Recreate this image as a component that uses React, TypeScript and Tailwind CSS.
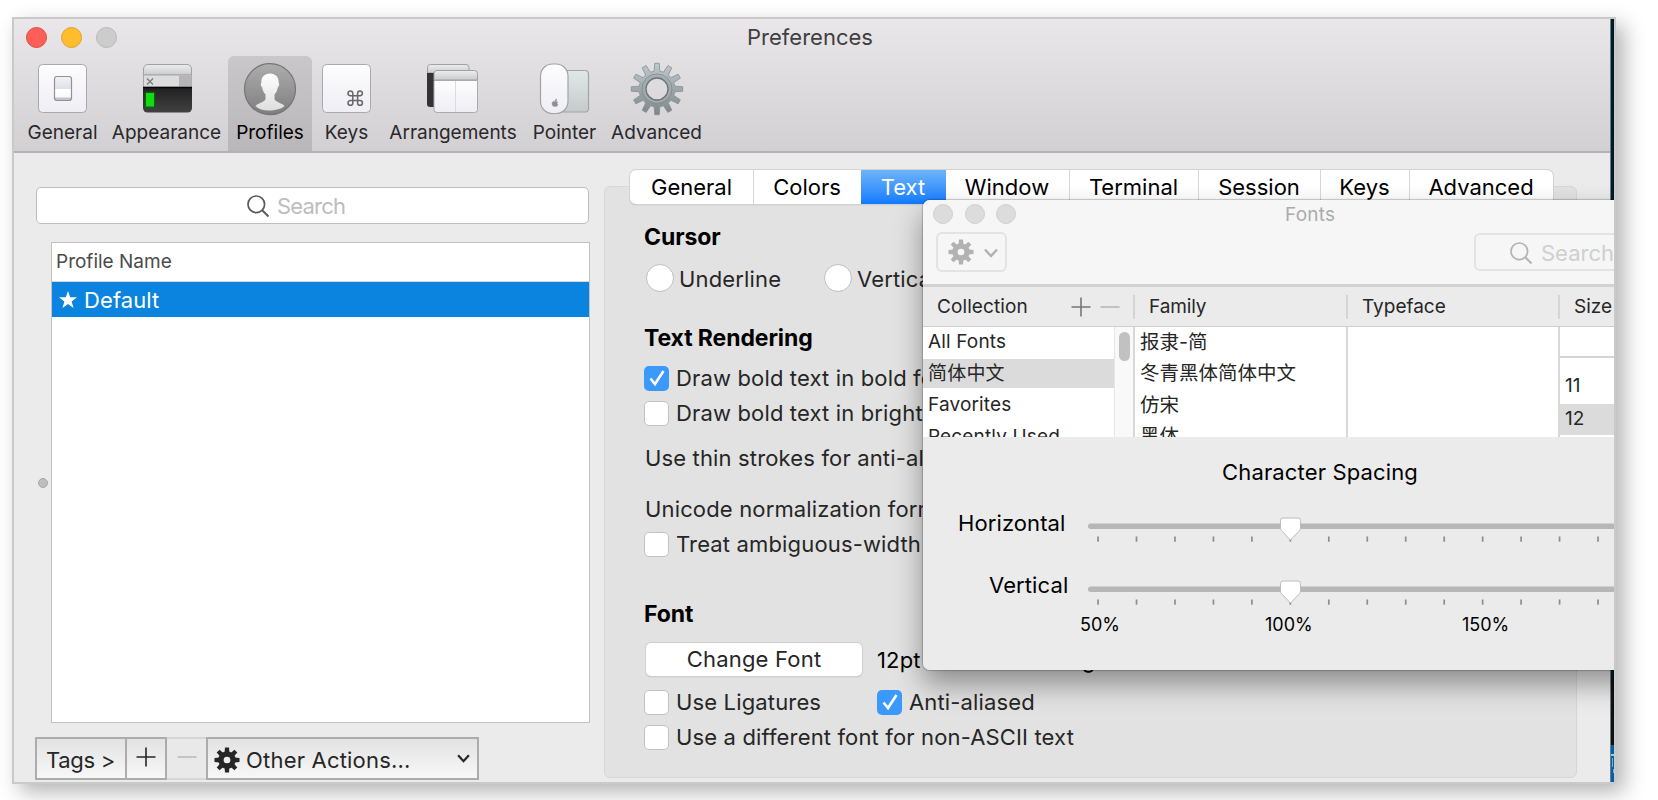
import React from "react";

function Gear({ teeth, r, inner, hole, tooth, className, fill }: { teeth: number; r: number; inner: number; hole: number; tooth: number; className: string; fill: string }) {
  const items = Array.from({ length: teeth }, (_, i) => (360 / teeth) * i);
  return (
    <svg viewBox="-27 -27 54 54" className={className}>
      {items.map((a) => (
        <path key={a} transform={`rotate(${a})`} fill={fill} d={`M${-tooth} ${-inner + 3}L${-tooth * 0.85} ${-r}H${tooth * 0.85}L${tooth} ${-inner + 3}Z`} />
      ))}
      <circle r={(inner + hole) / 2} fill="none" stroke={fill} strokeWidth={inner - hole} />
    </svg>
  );
}

function SmallGear({ className }: { className: string }) {
  return <Gear teeth={8} r={26} inner={18} hole={7} tooth={5} fill="currentColor" className={className} />;
}

function Magnifier({ className }: { className: string }) {
  return (
    <svg viewBox="0 0 23 23" className={className} fill="none" stroke="currentColor">
      <circle cx="9.3" cy="9.3" r="8.3" strokeWidth="1.7" />
      <path d="M15.2 15.2L21.5 21.5" strokeWidth="2" />
    </svg>
  );
}

function Plus({ className }: { className: string }) {
  return (
    <svg viewBox="0 0 20 20" className={className} stroke="currentColor" strokeWidth="1.6">
      <path d="M0.5 10H19.5M10 0.5V19.5" />
    </svg>
  );
}

function Minus({ className }: { className: string }) {
  return (
    <svg viewBox="0 0 20 20" className={className} stroke="currentColor" strokeWidth="1.4">
      <path d="M0.5 10H19.5" />
    </svg>
  );
}

function Chevron({ className }: { className: string }) {
  return (
    <svg viewBox="0 0 14 10" className={className} fill="none" stroke="currentColor" strokeWidth="2.5">
      <path d="M1 1.5L7 8L13 1.5" />
    </svg>
  );
}

function GeneralIcon() {
  return (
    <svg viewBox="0 1 54 54" className="mr-px h-[54px] w-[54px]">
      <defs>
        <linearGradient id="plate" x1="0" y1="0" x2="0" y2="1"><stop offset="0" stopColor="#fdfdfe" /><stop offset="1" stopColor="#eeeef4" /></linearGradient>
        <linearGradient id="sw" x1="0" y1="0" x2="0" y2="1"><stop offset="0" stopColor="#f2f4f7" /><stop offset="0.5" stopColor="#dde1ea" /><stop offset="0.52" stopColor="#fff" /><stop offset="0.85" stopColor="#fafafc" /><stop offset="0.9" stopColor="#c4c4c8" /></linearGradient>
      </defs>
      <rect x="3.5" y="3.5" width="48" height="48" rx="4" fill="url(#plate)" stroke="#a9a8ac" />
      <rect x="19.5" y="15.5" width="17" height="24" rx="2.5" fill="url(#sw)" stroke="#929296" strokeWidth="1.2" />
    </svg>
  );
}

function AppearanceIcon() {
  return (
    <svg viewBox="0 1 54 54" className="h-[54px] w-[54px]">
      <defs>
        <linearGradient id="bar" x1="0" y1="0" x2="0" y2="1"><stop offset="0" stopColor="#ecedee" /><stop offset="1" stopColor="#c9cccd" /></linearGradient>
        <linearGradient id="term" x1="0" y1="0" x2="0" y2="1"><stop offset="0" stopColor="#202020" /><stop offset="1" stopColor="#414141" /></linearGradient>
      </defs>
      <path d="M3.5 14V8a4.5 4.5 0 0 1 4.500-4.500H47a4.500 4.500 0 0 1 4.500 4.500V14Z" fill="url(#bar)" stroke="#a0a1a3" />
      <rect x="3.500" y="14" width="48" height="12" fill="#dcdcde" stroke="#a8a8aa" />
      <rect x="39" y="14.500" width="12.500" height="12" fill="#b5b5b7" />
      <path d="M7 17.500l6 6M13 17.500l-6 6" stroke="#777" strokeWidth="1.100" />
      <path d="M3 26H52V47a4.500 4.500 0 0 1-4.500 4.500H7.500A4.500 4.500 0 0 1 3 47Z" fill="url(#term)" />
      <path d="M3 26.500H52" stroke="#050505" strokeWidth="1.400" />
      <rect x="4.500" y="30.500" width="11" height="16.500" rx="1.500" fill="#0c6b0c" opacity="0.7" />
      <rect x="6" y="32" width="8" height="13.500" fill="#10dc10" />
    </svg>
  );
}

function ProfilesIcon() {
  return (
    <svg viewBox="0 0 54 54" className="h-[54px] w-[54px]">
      <defs>
        <linearGradient id="disc" x1="0" y1="0" x2="0" y2="1"><stop offset="0" stopColor="#adadad" /><stop offset="1" stopColor="#7e7e7e" /></linearGradient>
        <linearGradient id="man" x1="0" y1="0" x2="0" y2="1"><stop offset="0" stopColor="#fff" /><stop offset="1" stopColor="#dededf" /></linearGradient>
      </defs>
      <circle cx="27" cy="27.200" r="25.500" fill="url(#disc)" stroke="#757575" strokeWidth="1.200" />
      <path d="M27 11.500C32.500 11.500 36 15 35.600 20.500C36.800 21.500 36 24.500 34.700 25.800C34.300 29 32.500 31.500 31.500 32.500V37C32.500 40.500 38.500 40.500 41.500 44C36 49.500 18 50.500 12.500 44C15.500 40.500 21.500 40.500 22.500 37V32.500C21.500 31.500 19.700 29 19.300 25.800C18 24.500 17.200 21.500 18.400 20.500C18 15 21.500 11.500 27 11.500Z" fill="url(#man)" />
    </svg>
  );
}

function KeysIcon() {
  return (
    <svg viewBox="0 1 54 54" className="mr-px h-[54px] w-[54px]">
      <rect x="3.500" y="3.500" width="48" height="48" rx="4" fill="url(#plate)" stroke="#a9a8ac" />
      <path transform="translate(26.600 27.500) scale(.8)" d="M15 6v12a3 3 0 1 0 3-3H6a3 3 0 1 0 3 3V6a3 3 0 1 0-3 3h12a3 3 0 1 0-3-3" fill="none" stroke="#66676a" strokeWidth="1.900" />
    </svg>
  );
}

function ArrangementsIcon() {
  return (
    <svg viewBox="0 1 54 54" className="h-[54px] w-[54px]">
      <path d="M1.500 12V6.500a3 3 0 0 1 3-3H40a3 3 0 0 1 3 3V12Z" fill="url(#bar)" stroke="#a0a1a3" />
      <path d="M1 12H12V46H4a3 3 0 0 1-3-3Z" fill="#333" />
      <path d="M8 19V12.500a3 3 0 0 1 3-3H48.500a3 3 0 0 1 3 3V19Z" fill="url(#bar)" stroke="#a0a1a3" />
      <path d="M8 19.500H51.500V48.500a3 3 0 0 1-3 3H11a3 3 0 0 1-3-3Z" fill="url(#plate)" stroke="#a9aaae" />
      <path d="M29.500 20V51" stroke="#dcdce0" />
    </svg>
  );
}

function PointerIcon() {
  return (
    <svg viewBox="0 0.5 54 54" className="h-[54px] w-[54px]">
      <defs><linearGradient id="pad" x1="0" y1="0" x2="0" y2="1"><stop offset="0" stopColor="#e0e8e7" /><stop offset="1" stopColor="#c6cbca" /></linearGradient></defs>
      <rect x="20" y="9" width="30.500" height="41.500" rx="3.500" fill="url(#pad)" stroke="#a0a5a5" strokeWidth="1.200" />
      <rect x="2.500" y="2.500" width="27.500" height="49.500" rx="12" fill="url(#plate)" stroke="#a3a3a7" strokeWidth="1.200" />
      <path d="M14.500 40.500c.8-1 1.700-.5 2.500-.5s1.700-.8 2.700.4c-1 .8-.9 2 .2 2.600c-.5 1.400-1.200 2.100-1.900 1.900c-.6-.3-1.300-.3-1.900 0c-1.500.2-2.700-2.800-1.600-4.400ZM17 39.600c0-1.200.7-2 1.700-2.200c0 1.200-.7 2-1.700 2.200Z" fill="#8f8f93" stroke="#8f8f93" strokeWidth=".5" />
    </svg>
  );
}

function AdvancedIcon() {
  return (
    <svg viewBox="-27 -27 54 54" className="h-[54px] w-[54px]">
      <defs><linearGradient id="steel" gradientUnits="userSpaceOnUse" x1="0" y1="-26" x2="0" y2="26"><stop offset="0" stopColor="#bccbd1" /><stop offset="1" stopColor="#7f8586" /></linearGradient></defs>
      <mask id="hub"><rect x="-27" y="-27" width="54" height="54" fill="#fff" /><circle r="11" fill="#000" /></mask>
      <g mask="url(#hub)">
        <path
          d={Array.from({ length: 12 }, (_, i) => {
            const p = (rad: number, deg: number) => {
              const t = ((i * 30 + deg - 90) * Math.PI) / 180;
              return `${(rad * Math.cos(t)).toFixed(2)} ${(rad * Math.sin(t)).toFixed(2)}`;
            };
            return `${i ? "L" : "M"}${p(18, -9)}L${p(25.8, -5)}L${p(25.8, 5)}L${p(18, 9)}`;
          }).join("") + "Z"}
          fill="url(#steel)" stroke="#858d90" strokeWidth=".8"
        />
      </g>
      <circle r="15" fill="none" stroke="#868e91" strokeWidth="1" />
      <circle r="12.800" fill="none" stroke="#a4acaf" strokeWidth="1.600" />
      <circle r="11" fill="none" stroke="#6d7477" strokeWidth="1.300" />
    </svg>
  );
}

const tools = [
  { label: "General", icon: <GeneralIcon />, cls: "w-[85px]" },
  { label: "Appearance", icon: <AppearanceIcon />, cls: "w-[123px]" },
  { label: "Profiles", icon: <ProfilesIcon />, cls: "w-[84px] bg-gradient-to-b from-[#c9c7ca] to-[#b9b7ba] rounded-t-[6px] text-black" },
  { label: "Keys", icon: <KeysIcon />, cls: "w-[69px]" },
  { label: "Arrangements", icon: <ArrangementsIcon />, cls: "w-[144px]" },
  { label: "Pointer", icon: <PointerIcon />, cls: "w-[79px]" },
  { label: "Advanced", icon: <AdvancedIcon />, cls: "w-[105px]" },
];

function Toolbar() {
  return (
    <div className="flex h-[134px] flex-col border-b-2 border-[#b4b2b5] bg-gradient-to-b from-[#e9e7ea] to-[#d2d0d3]">
      <div className="flex h-9 flex-none items-center pl-3">
        <div className="flex flex-1 gap-[14px]">
          <i className="h-[21px] w-[21px] rounded-full border border-[#e2473f] bg-[#ff5f57]" />
          <i className="h-[21px] w-[21px] rounded-full border border-[#e0a030] bg-[#ffbd2e]" />
          <i className="h-[21px] w-[21px] rounded-full border border-[#b9b8ba] bg-[#cdcccd]" />
        </div>
        <h1 className="text-[22px] leading-[28px] text-[#403e41]">Preferences</h1>
        <div className="flex-1 pr-4" />
      </div>
      <nav className="flex h-24 pt-px pl-1.5 text-[19px] text-[#2a282b]">
        {tools.map((t) => (
          <div key={t.label} className={`flex flex-none flex-col items-center pt-[6px] ${t.cls}`}>
            {t.icon}
            <span className="mt-[5px] leading-[24px] whitespace-nowrap">{t.label}</span>
          </div>
        ))}
      </nav>
    </div>
  );
}

function Sidebar() {
  return (
    <div className="flex w-[590px] flex-none flex-col pt-[34px]">
      <div className="ml-[22px] flex h-[37px] w-[553px] items-center rounded-[5px] border border-[#bdbdbd] bg-white pl-[210px]">
        <Magnifier className="mt-0.5 h-[23px] w-[23px] text-[#5a5a5a]" />
        <span className="mt-0.5 ml-[7px] text-[22px] tracking-[-0.8px] text-[#bdbdbd]">Search</span>
      </div>
      <div className="mt-[18px] flex h-[481px]">
        <div className="flex w-[37px] items-center justify-center pl-5">
          <i className="h-2.5 w-2.5 flex-none rounded-full border border-[#a8a8a8] bg-[#bebebe]" />
        </div>
        <div className="w-[539px] border border-[#c2c2c2] bg-white">
          <div className="flex h-[39px] items-center border-b border-[#dadada] pl-1 text-[19px] text-[#4b4b4b]">Profile Name</div>
          <div className="flex h-[35px] items-center bg-[#0a84df] pl-[7px] text-[22px] text-white">
            <svg viewBox="0 0 18 17" className="mr-[7px] h-[17px] w-[18px]"><path fill="currentColor" d="M9 0l2.200 6.300H18l-5.400 4.100 2 6.600L9 13l-5.600 4 2-6.600L0 6.300h6.800z" /></svg>
            <span className="pt-0.5 tracking-[0.1px]">Default</span>
          </div>
        </div>
      </div>
      <div className="mt-[14px] ml-[21px] flex h-[43px] w-[444px] text-[22px] text-[#262626]">
        <div className="flex w-[91px] items-center border-2 border-r border-[#acacac] bg-gradient-to-b from-[#e3e3e3] to-[#f7f7f7] pt-1 pl-[9px]"><span className="tracking-[-0.3px] whitespace-nowrap">Tags &gt;</span></div>
        <div className="flex w-[41px] justify-center border-2 border-l border-[#acacac] bg-gradient-to-b from-[#e3e3e3] to-[#f7f7f7] pt-[8px]"><Plus className="h-5 w-5" /></div>
        <div className="flex w-[39px] justify-center border-y-2 border-[#d6d6d6] bg-[#e9e9e9] pt-[8px]"><Minus className="h-5 w-5 text-[#b5b5b5]" /></div>
        <div className="flex w-[273px] items-center border-2 border-[#acacac] bg-gradient-to-b from-[#e3e3e3] to-[#f7f7f7] pl-[6px]">
          <SmallGear className="mt-[2px] h-[26px] w-[26px]" />
          <span className="ml-[6px] flex-1 pt-[3px] tracking-[0.2px] whitespace-nowrap">Other Actions...</span>
          <Chevron className="mr-[7px] h-[9px] w-[13px]" />
        </div>
      </div>
    </div>
  );
}

function Check({ on, children }: { on?: boolean; children: React.ReactNode }) {
  return (
    <div className="flex items-center">
      {on ? (
        <i className="flex h-[25px] w-[25px] flex-none items-center justify-center rounded-[5px] bg-[#3b99fc]">
          <svg viewBox="0 0 18 18" className="h-[18px] w-[18px]" fill="none" stroke="#fff" strokeWidth="2.600"><path d="M2.500 9.500L7 15L15.500 2" /></svg>
        </i>
      ) : (
        <i className="h-[25px] w-[25px] flex-none rounded-[5px] border border-[#c2c2c2] bg-white" />
      )}
      <span className="ml-[7px] whitespace-nowrap">{children}</span>
    </div>
  );
}

function Radio({ children }: { children: React.ReactNode }) {
  return (
    <div className="flex h-7 items-center">
      <i className="h-7 w-7 flex-none rounded-full border border-[#bfbfbf] bg-white" />
      <span className="ml-[5px] pt-0.5 whitespace-nowrap">{children}</span>
    </div>
  );
}

const tabs = [
  { label: "General", cls: "w-[123px] pl-px" },
  { label: "Colors", cls: "w-[108px] border-l border-[#d8d8d8]" },
  { label: "Text", cls: "w-[85px] bg-gradient-to-b from-[#6cb3fa] to-[#0a7bff] text-white" },
  { label: "Window", cls: "w-[123px]" },
  { label: "Terminal", cls: "w-[129px] border-l border-[#d8d8d8]" },
  { label: "Session", cls: "w-[122px] border-l border-[#d8d8d8]" },
  { label: "Keys", cls: "w-[89px] border-l border-[#d8d8d8]" },
  { label: "Advanced", cls: "w-[144px] border-l border-[#d8d8d8]" },
];

function Settings() {
  return (
    <div className="flex w-[973px] flex-none flex-col pt-[17px]">
      <div className="z-10 ml-[26px] flex h-[34px] w-[923px] flex-none overflow-hidden rounded-[6px] bg-white text-[22px] text-black shadow-[0_0_0_1px_#d2d2d2,0_1px_1px_#999]">
        {tabs.map((t) => (
          <div key={t.label} className={`flex flex-none items-center justify-center pr-px ${t.cls}`}>{t.label}</div>
        ))}
      </div>
      <div className="mt-[-18px] flex h-[592px] flex-col rounded-[6px] border border-[#d7d7d7] bg-[#e2e2e2] pt-[36px] pl-[39px] text-[22px] leading-[28px] tracking-[0.15px] text-[#262626]">
        <h2 className="text-[23px] font-bold tracking-[-0.1px] text-black">Cursor</h2>
        <div className="mt-[13px] flex pl-[2px]">
          <div className="w-[178px]"><Radio>Underline</Radio></div>
          <Radio>Vertical Bar</Radio>
        </div>
        <h2 className="mt-[32px] text-[23px] font-bold tracking-[-0.1px] text-black">Text Rendering</h2>
        <div className="mt-[12px]"><Check on>Draw bold text in bold font</Check></div>
        <div className="mt-[7px]"><Check>Draw bold text in bright colors</Check></div>
        <p className="mt-[17px] pl-px whitespace-nowrap">Use thin strokes for anti-aliased text</p>
        <p className="mt-[23px] pl-px whitespace-nowrap">Unicode normalization form:</p>
        <div className="mt-[7px]"><Check>Treat ambiguous-width characters</Check></div>
        <h2 className="mt-[42px] text-[23px] font-bold tracking-[-0.1px] text-black">Font</h2>
        <div className="mt-[14px] flex h-[34px] items-center pl-[2px]">
          <button className="h-[33px] w-[216px] rounded-[5px] bg-white tracking-[0.2px] text-[#262626] shadow-[0_0_0_1px_#cfcfcf,0_1px_1px_#999]">Change Font</button>
          <span className="ml-[15px] pt-0.5 whitespace-nowrap text-black">12pt Inconsolata Reg</span>
        </div>
        <div className="mt-[12px] flex">
          <div className="w-[233px]"><Check>Use Ligatures</Check></div>
          <Check on>Anti-aliased</Check>
        </div>
        <div className="mt-[7px]"><Check>Use a different font for non-ASCII text</Check></div>
      </div>
    </div>
  );
}

function Slider() {
  const ticks = Array.from({ length: 14 }, (_, i) => 10 + i * 38.46);
  return (
    <svg viewBox="0 0 526 28" className="mt-px h-[28px] w-[526px] flex-none">
      <rect x="0" y="7.500" width="560" height="5.500" rx="2.700" fill="#b7b7b7" />
      {ticks.map((x) => (
        <rect key={x} x={x - 0.8} y="20.500" width="1.700" height="5.200" fill="#8d8d8d" />
      ))}
      <path d="M192.500 4.500a2.500 2.500 0 0 1 2.500-2.500h15a2.500 2.500 0 0 1 2.500 2.500v7.500c0 1.500-.5 2-1.500 3.200L202.500 24L194 15.200c-1-1.200-1.500-1.700-1.500-3.200Z" fill="#fff" stroke="#bcbcbc" />
    </svg>
  );
}

function FontsPanel() {
  return (
    <div className="absolute top-[181px] left-[909px] z-20 flex h-[470px] w-[691px] flex-col overflow-hidden rounded-l-[7px] bg-[#ebebeb] text-[#262626]">
      <div className="flex h-[87px] flex-none flex-col border-b-[3px] border-[#d2d2d2] bg-[#f6f6f6]">
        <div className="flex h-[27px] items-center pl-2.5">
          <div className="flex w-[352px] gap-[11.500px]">
            <i className="h-5 w-5 rounded-full border border-[#cfcfcf] bg-[#dcdcdc]" />
            <i className="h-5 w-5 rounded-full border border-[#cfcfcf] bg-[#dcdcdc]" />
            <i className="h-5 w-5 rounded-full border border-[#cfcfcf] bg-[#dcdcdc]" />
          </div>
          <span className="pt-[3px] text-[19px] tracking-[0.2px] text-[#ababab]">Fonts</span>
        </div>
        <div className="mt-[5px] flex h-10">
          <div className="ml-[13px] flex h-10 w-[71px] flex-none items-center rounded-[6px] border-2 border-[#e3e3e3] pl-[10px] text-[#b2b2b2]">
            <SmallGear className="h-[26px] w-[26px]" />
            <Chevron className="mt-0.5 ml-[10px] h-[10px] w-[14px]" />
          </div>
          <div className="mt-px ml-[467px] flex h-[38px] w-[200px] flex-none items-center rounded-[6px] border-2 border-[#e3e3e3] pl-[34px]">
            <Magnifier className="mt-0.5 h-[23px] w-[23px] flex-none text-[#b3b3b3]" />
            <span className="mt-0.5 ml-2 text-[22px] text-[#cfcfcf]">Search</span>
          </div>
        </div>
      </div>
      <div className="flex h-[40px] flex-none items-center border-b border-[#cfcfcf] text-[19px]">
        <div className="flex h-6 w-[212px] items-center border-r-2 border-[#d5d5d5] pl-[14px]">
          <span className="w-[134px] pt-0.5 tracking-[0.1px]">Collection</span>
          <Plus className="h-5 w-5 text-[#777]" />
          <Minus className="ml-[9px] h-5 w-5 text-[#b0b0b0]" />
        </div>
        <div className="flex h-6 w-[213px] items-center border-r-2 border-[#d5d5d5] pt-0.5 pl-[14px]"><span className="tracking-[-0.1px]">Family</span></div>
        <div className="flex h-6 w-[212px] items-center border-r-2 border-[#d5d5d5] pt-0.5 pl-[14px]"><span>Typeface</span></div>
        <div className="pt-0.5 pl-[14px]">Size</div>
      </div>
      <div className="flex h-[110px] flex-none overflow-hidden bg-white text-[18.500px] leading-[31px] whitespace-nowrap">
        <div className="w-[191px] text-[19px] tracking-[0.15px]">
          <div className="h-8 pl-[5px] leading-[29px]">All Fonts</div>
          <div className="h-[29px] bg-[#dbdbdb] pl-[5px] leading-[29px] tracking-[0.2px]">简体中文</div>
          <div className="h-8 pl-[5px] leading-[33px]">Favorites</div>
          <div className="h-8 pl-[5px] leading-[33px]">Recently Used</div>
        </div>
        <div className="w-[19px] border-l border-[#e6e6e6] bg-[#f9f9f9] pt-[5px] pl-1"><i className="block h-[29px] w-[11px] rounded-full bg-[#c1c1c1]" /></div>
        <div className="w-[215px] border-x-2 border-[#d8d8d8] pl-[5px] text-[19.500px]">
          <div className="h-[31px] leading-[30px]">报隶-简</div>
          <div className="h-[31px] leading-[31px]">冬青黑体简体中文</div>
          <div className="h-[31px] leading-[32px]">仿宋</div>
          <div className="h-[31px] leading-[33px]">黑体</div>
        </div>
        <div className="w-[212px] border-r-2 border-[#d8d8d8]" />
        <div className="w-[54px] text-[19px]">
          <div className="h-[31px] border-b-2 border-[#d5d5d5]" />
          <div className="h-[46px] pl-[5px] leading-[56px]">11</div>
          <div className="h-[31px] bg-[#dbdbdb] pl-[5px] leading-[29px]">12</div>
        </div>
      </div>
      <div className="flex flex-none flex-col pt-[21px] text-[22px] text-black">
        <div className="pl-[299px] leading-7 tracking-[0.15px]">Character Spacing</div>
        <div className="mt-[29px] flex h-[28px] items-start"><span className="w-[165px] pl-[35px] leading-[16px] tracking-[0.1px]">Horizontal</span><Slider /></div>
        <div className="mt-[35px] flex h-[28px] items-start"><span className="w-[165px] pl-[66px] leading-[15px] tracking-[0.1px]">Vertical</span><Slider /></div>
        <div className="mt-[5px] flex text-[18px] leading-7">
          <span className="ml-[157px] w-[185px]">50%</span>
          <span className="w-[197px]">100%</span>
          <span>150%</span>
        </div>
      </div>
    </div>
  );
}

export default function App() {
  return (
    <div className="h-[800px] w-[1658px] overflow-hidden bg-white pt-[17px] pl-3 font-['Inter','Noto_Sans_CJK_SC',sans-serif]">
      <div className="h-[767px] w-[1604px] border-2 border-[#c9c9c9] shadow-[8px_8px_20px_rgba(0,0,0,0.3)]">
        <div className="relative flex h-[763px] w-[1600px] overflow-hidden bg-[#ebebeb]">
          <div className="w-[1596px] flex-none">
            <Toolbar />
            <div className="flex"><Sidebar /><Settings /></div>
          </div>
          <div className="flex w-1 flex-col border-l border-[#6c7f88] bg-[#001c26]">
            <div className="flex-1" />
            <div className="h-[67px] bg-[#111]" />
            <div className="flex h-[37px] flex-col bg-[#0060a8] pt-[9px]">
              <i className="h-[2px] w-[3px] bg-[#a9c8e0]" />
              <i className="mt-[2px] ml-px h-[9px] w-px bg-[#7fabd0]" />
              <i className="mt-[2px] ml-[2px] h-[4px] w-px bg-[#7fabd0]" />
            </div>
          </div>
          <div className="absolute top-[181px] left-[909px] z-10 h-[470px] w-[900px] rounded-[7px] shadow-[0_0_1px_1px_rgba(0,0,0,0.2),0_14px_28px_rgba(0,0,0,0.38)]" />
          <FontsPanel />
        </div>
      </div>
    </div>
  );
}
